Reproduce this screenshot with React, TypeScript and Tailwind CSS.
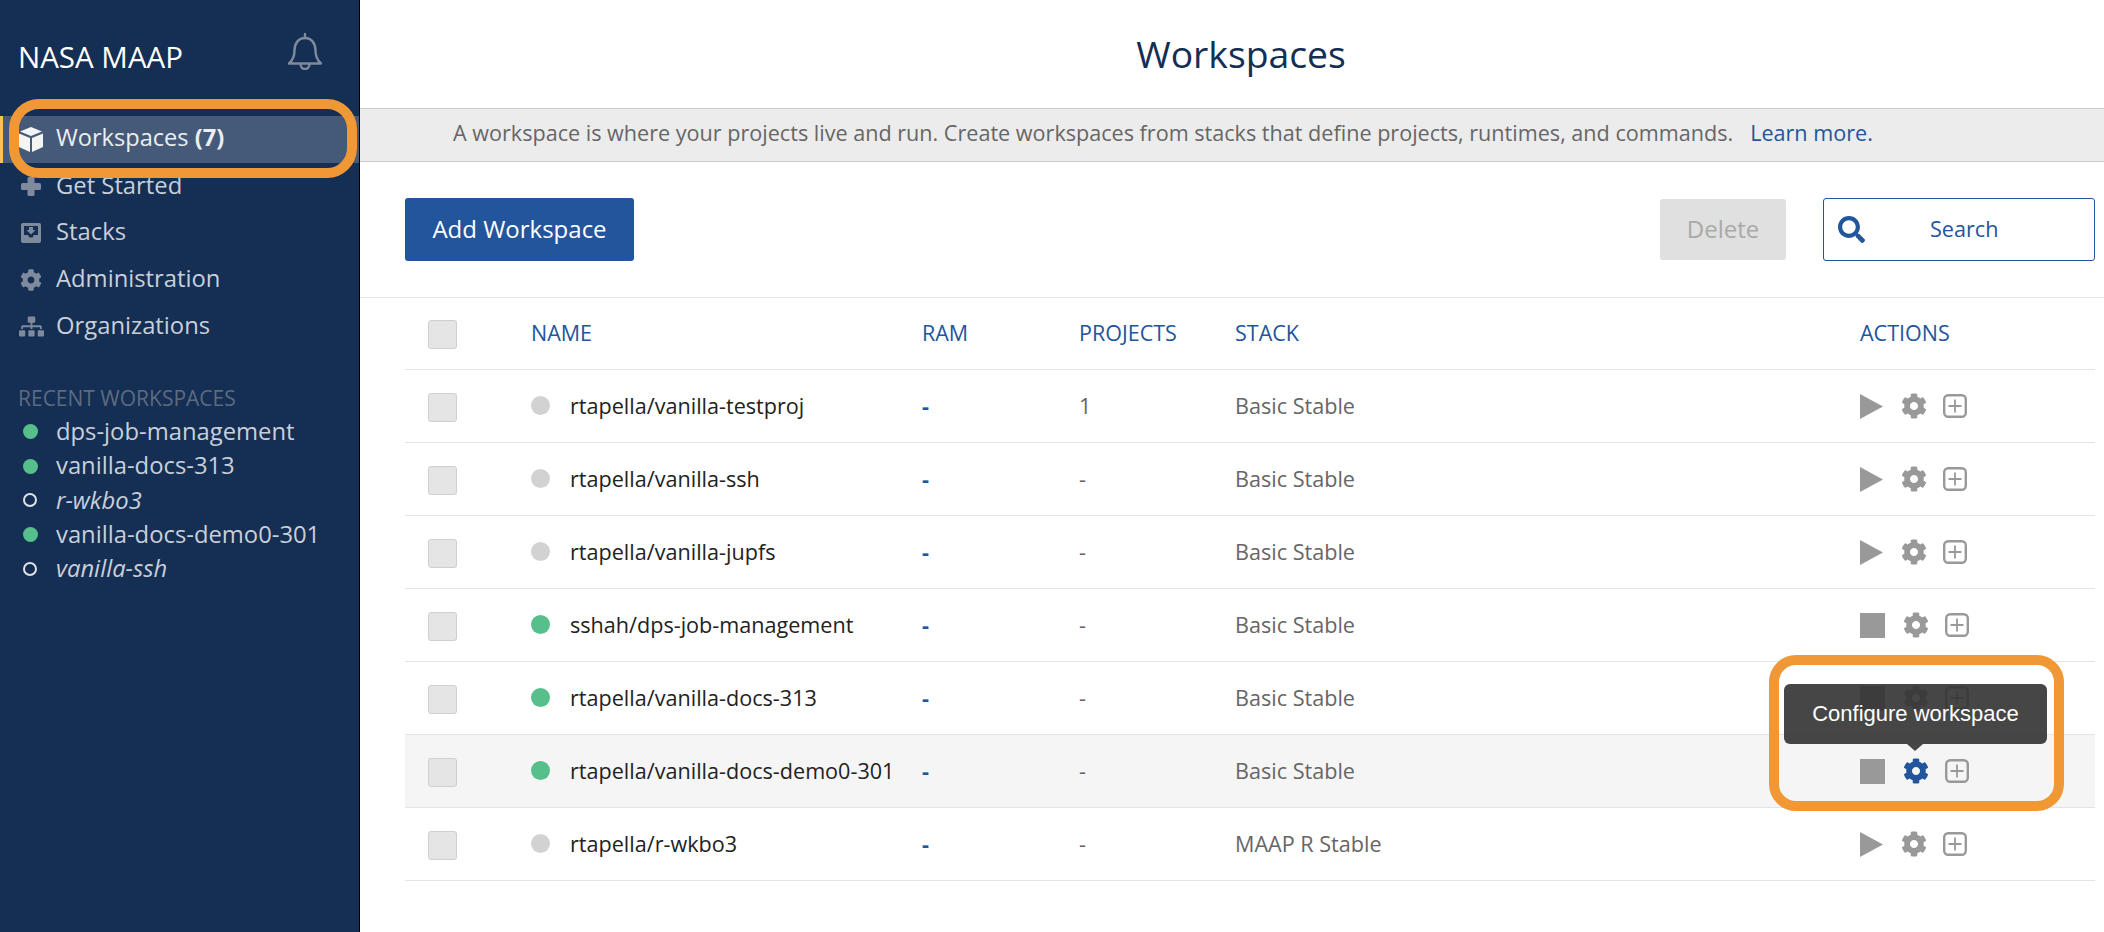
import React from "react";
import { FaCog, FaSitemap, FaSearch } from "react-icons/fa";

const workspaces = [
  { name: "rtapella/vanilla-testproj", projects: "1", stack: "Basic Stable", running: false },
  { name: "rtapella/vanilla-ssh", projects: "-", stack: "Basic Stable", running: false },
  { name: "rtapella/vanilla-jupfs", projects: "-", stack: "Basic Stable", running: false },
  { name: "sshah/dps-job-management", projects: "-", stack: "Basic Stable", running: true },
  { name: "rtapella/vanilla-docs-313", projects: "-", stack: "Basic Stable", running: true },
  { name: "rtapella/vanilla-docs-demo0-301", projects: "-", stack: "Basic Stable", running: true, hover: true },
  { name: "rtapella/r-wkbo3", projects: "-", stack: "MAAP R Stable", running: false },
];

const recent = [
  { name: "dps-job-management", running: true },
  { name: "vanilla-docs-313", running: true },
  { name: "r-wkbo3", running: false },
  { name: "vanilla-docs-demo0-301", running: true },
  { name: "vanilla-ssh", running: false },
];

const BellIcon = () => (
  <svg width="36" height="38" viewBox="0 0 36 38" fill="none" stroke="#7f8a9c" strokeWidth="2.4">
    <path d="M2 31.500c4-3.500 5.500-7 5.500-13 0-7 4-12.500 10.500-12.500s10.500 5.500 10.500 12.500c0 6 1.500 9.500 5.500 13z" strokeLinejoin="round" />
    <path d="M18 6V2" strokeLinecap="round" />
    <path d="M13.500 32c0 3 2 5 4.500 5s4.500-2 4.500-5" />
  </svg>
);

const CubeIcon = () => (
  <svg width="24" height="25" viewBox="0 0 24 25" fill="#f4f4f4">
    <path d="M12 0l11 4.500L12 9 1 4.500z" />
    <path d="M0 6.500l11 4.500v14L0 20z" />
    <path d="M24 6.500L13 11v14l11-5z" />
  </svg>
);

const PlusIcon = () => (
  <svg width="20" height="19" viewBox="0 0 20 19" fill="#7f8a9c">
    <rect x="0" y="6" width="20" height="7" rx="1.500" />
    <rect x="6.500" y="0" width="7" height="19" rx="1.500" />
  </svg>
);

const StacksIcon = () => (
  <svg width="20" height="20" viewBox="0 0 20 20" fill="#7f8a9c">
    <path d="M2 0h16a2 2 0 0 1 2 2v16a2 2 0 0 1-2 2H2a2 2 0 0 1-2-2V2a2 2 0 0 1 2-2zm1 3v9h4l1.500 2.500h3L13 12h4V3zM8 4h4v3h2.500L10 11.500 5.500 7H8z" fillRule="evenodd" />
  </svg>
);

const PlusBox = () => (
  <svg width="24" height="24" viewBox="0 0 24 24" fill="none" stroke="#999999" className="-ml-px">
    <rect x="1.200" y="1.200" width="21.600" height="21.600" rx="4" strokeWidth="2.400" />
    <path d="M12 5.500v13M5.500 12h13" strokeWidth="1.800" />
  </svg>
);

const NavItem = ({ icon, children }: { icon: React.ReactNode; children: React.ReactNode }) => (
  <div className="flex h-[46.700px] items-center text-[23.800px] text-[#c9cfd8]">
    <span className="flex w-[56px] shrink-0 justify-center pl-[6px] text-[#7f8a9c]">{icon}</span>
    <span className="pb-[2px]">{children}</span>
  </div>
);

const Sidebar = () => (
  <aside className="flex h-[932px] w-[360px] shrink-0 flex-col border-r border-black bg-[#142e54]">
    <div className="flex h-[116px] items-start justify-between pl-[18px] pr-[36px]">
      <span className="mt-[37px] text-[29.500px] leading-[40px] text-white">NASA MAAP</span>
      <span className="mt-[32px]"><BellIcon /></span>
    </div>
    <div className="flex h-[47px] items-center border-l-[3px] border-[#f5c451] bg-[#445a78] text-[23.600px] text-[#eceef1]">
      <span className="flex w-[53px] shrink-0 justify-center pl-[3px]"><CubeIcon /></span>
      <span className="pb-[3px]">Workspaces <b className="font-bold">(7)</b></span>
    </div>
    <NavItem icon={<PlusIcon />}>Get Started</NavItem>
    <NavItem icon={<StacksIcon />}>Stacks</NavItem>
    <NavItem icon={<FaCog size={22} />}>Administration</NavItem>
    <NavItem icon={<FaSitemap size={25} />}>Organizations</NavItem>
    <div className="mt-[35px] pl-[18px] text-[21px] leading-[26px] text-[#5d6b80]">RECENT WORKSPACES</div>
    <div className="mt-[4px] flex flex-col">
      {recent.map((item) => (
        <div key={item.name} className="flex h-[34.300px] items-center text-[23.800px] text-[#c9cfd8]">
          <span className="flex w-[56px] shrink-0 pl-[23px]">
            <span
              className={
                item.running
                  ? "h-[15px] w-[15px] rounded-full bg-[#56bf8b]"
                  : "h-[14px] w-[14px] rounded-full border-[2.500px] border-[#dfe2e6]"
              }
            />
          </span>
          <span className={item.running ? "" : "italic"}>{item.name}</span>
        </div>
      ))}
    </div>
  </aside>
);

const rowGrid = "grid grid-cols-[126px_391px_157px_156px_625px_1fr] items-center";

const Checkbox = () => (
  <span className="ml-[23px] mt-[2px] block h-[29px] w-[29px] rounded-[3px] border border-[#cfcfcf] bg-[#e5e5e5]" />
);

const Row = ({ w }: { w: (typeof workspaces)[number] }) => (
  <div className={`${rowGrid} h-[73px] border-b border-[#e4e4e4] text-[21.600px] text-[#666666] ${w.hover ? "bg-[#f5f5f5]" : ""}`}>
    <Checkbox />
    <div className="flex items-center">
      <span className={`h-[19px] w-[19px] rounded-full ${w.running ? "bg-[#56bf8b]" : "bg-[#d2d2d2]"}`} />
      <span className="ml-[20px] whitespace-nowrap text-[#222222]">{w.name}</span>
    </div>
    <span className="font-bold text-[#22559c]">-</span>
    <span>{w.projects}</span>
    <span>{w.stack}</span>
    <div className="flex items-center gap-[18px] text-[#999999]">
      {w.running ? (
        <span className="h-[25px] w-[25px] bg-[#999999]" />
      ) : (
        <svg width="23" height="25" viewBox="0 0 23 25" fill="#999999"><path d="M0 0l23 12.500L0 25z" /></svg>
      )}
      <span className={`flex w-[25px] justify-center ${w.hover ? "text-[#22559c]" : ""}`}><FaCog size={26} className="shrink-0" /></span>
      <PlusBox />
    </div>
  </div>
);

export default function App() {
  return (
    <div className="relative flex h-[932px] w-[2104px] overflow-hidden bg-white font-['Open_Sans',sans-serif]">
      <Sidebar />
      <main className="flex min-w-0 flex-1 flex-col">
        <h1 className="flex h-[108px] items-center justify-center pl-[18px] text-[37.300px] font-normal text-[#142e54]">Workspaces</h1>
        <div className="flex h-[54px] items-center border-y border-[#cccccc] bg-[#ececec] pb-[3px] pl-[93px] text-[21.600px] text-[#666666]">
          A workspace is where your projects live and run. Create workspaces from stacks that define projects, runtimes, and commands.
          <span className="ml-[17px] text-[#22559c]">Learn more.</span>
        </div>
        <div className="flex h-[136px] items-start border-b border-[#e4e4e4] pl-[45px] pr-[9px] pt-[36px]">
          <button className="h-[63px] w-[229px] rounded-[3px] bg-[#22559c] pb-[2px] text-[24px] text-white">Add Workspace</button>
          <button className="ml-auto mt-[1px] h-[61px] w-[126px] rounded-[3px] bg-[#e0e0e0] pb-[2px] text-[24px] text-[#a9a9a9]">Delete</button>
          <div className="ml-[37px] flex h-[63px] w-[272px] items-center rounded-[3px] border border-[#22559c] pl-[14px] text-[#22559c]">
            <FaSearch size={27} />
            <span className="ml-[65px] text-[21.600px]">Search</span>
          </div>
        </div>
        <div className="ml-[45px] mr-[9px]">
          <div className={`${rowGrid} h-[72px] border-b border-[#e4e4e4] text-[21.500px] text-[#22559c]`}>
            <Checkbox />
            <span>NAME</span>
            <span>RAM</span>
            <span>PROJECTS</span>
            <span>STACK</span>
            <span>ACTIONS</span>
          </div>
          {workspaces.map((w) => (
            <Row key={w.name} w={w} />
          ))}
        </div>
      </main>

      {/* annotations + tooltip sit over the page */}
      <div className="absolute left-[1784px] top-[684px] flex h-[60px] w-[263px] items-center justify-center rounded-[6px] bg-[#323232]/90 pb-[2px] font-['Liberation_Sans',sans-serif] text-[22px] text-white">
        Configure workspace
        <span className="absolute left-[123px] top-[60px] h-0 w-0 border-x-[8px] border-t-[7px] border-x-transparent border-t-[#474747]" />
      </div>
      <div className="absolute left-[9px] top-[99px] h-[79px] w-[348px] rounded-[30px] border-[10px] border-[#f09836]" />
      <div className="absolute left-[1769px] top-[655px] h-[156px] w-[295px] rounded-[27px] border-[10px] border-[#f09836]" />
    </div>
  );
}
